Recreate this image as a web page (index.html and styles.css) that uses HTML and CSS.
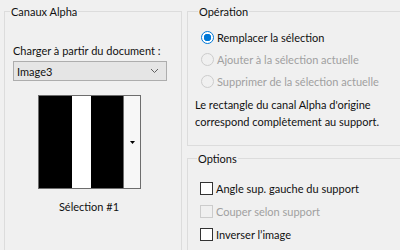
FILE: index.html
```html
<!DOCTYPE html>
<html lang="fr">
<head>
    <meta charset="UTF-8">
    <title>Canaux Alpha</title>
    <link rel="stylesheet" href="styles.css">
</head>
<body>

    <div class="dialog">
        <fieldset class="group group-left">
            <legend>Canaux Alpha</legend>
            <div class="field-label">Charger à partir du document :</div>
            <div class="select">
                <span>Image3</span>
                <svg width="9" height="6" viewBox="0 0 9 6"><polyline points="1,1 4.5,4.5 8,1" fill="none" stroke="#606060" stroke-width="1"/></svg>
            </div>
            <div class="thumb">
                <div class="thumb-img"></div>
                <div class="thumb-btn">
                    <svg width="5" height="3" viewBox="0 0 5 3"><polygon points="0,0 5,0 2.5,3" fill="#000"/></svg>
                </div>
            </div>
            <div class="caption">Sélection #1</div>
        </fieldset>

        <div class="col-right">
            <fieldset class="group group-op">
                <legend>Opération</legend>
                <label class="option"><input type="radio" name="op" checked> Remplacer la sélection</label>
                <label class="option disabled"><input type="radio" name="op" disabled> Ajouter à la sélection actuelle</label>
                <label class="option disabled"><input type="radio" name="op" disabled> Supprimer de la sélection actuelle</label>
                <p class="note">Le rectangle du canal Alpha d'origine<br>correspond complètement au support.</p>
            </fieldset>

            <fieldset class="group group-opts">
                <legend>Options</legend>
                <label class="check"><input type="checkbox"> Angle sup. gauche du support</label>
                <label class="check disabled"><input type="checkbox" disabled> Couper selon support</label>
                <label class="check"><input type="checkbox"> Inverser l’image</label>
            </fieldset>
        </div>
    </div>

</body>
</html>
```

FILE: styles.css
```css
body {
    margin: 0;
    background-color: #f0f0f0;
    font-family: Lato, "Open Sans", sans-serif;
    font-size: 11px;
    color: #111;
    overflow: hidden;
}

.dialog {
    display: flex;
    gap: 5px;
    padding: 4px 0 0 4px;
    width: 460px;
}

.group {
    margin: 0;
    padding: 0 8px;
    border: 1px solid #dcdcdc;
    min-width: 0;
    box-sizing: border-box;
}

.group legend {
    padding: 0 1px;
    margin-left: -3px;
    line-height: 15px;
}

.group-left {
    width: 178px;
    height: 280px;
}

.field-label {
    margin-top: 24px;
    line-height: 16px;
}

.select {
    margin-top: 2px;
    height: 18px;
    border: 1px solid #adadad;
    background-color: #e5e5e5;
    display: flex;
    align-items: center;
    justify-content: space-between;
    padding: 0 7px 0 3px;
    box-sizing: content-box;
    width: 142px;
}

.thumb {
    display: flex;
    margin: 14px 0 0 25px;
}

.thumb-img {
    width: 84px;
    height: 92px;
    border: 1px solid #6d6d6d;
    background: linear-gradient(to right, #000 0, #000 33px, #fff 33px, #fff 52px, #000 52px);
}

.thumb-btn {
    width: 16px;
    height: 92px;
    border: 1px solid #6d6d6d;
    border-left: none;
    background-color: #f7f7f7;
    display: flex;
    align-items: center;
    justify-content: center;
}

.caption {
    margin-top: 10px;
    width: 152px;
    text-align: center;
    line-height: 16px;
}

.col-right {
    display: flex;
    flex-direction: column;
    gap: 5px;
    width: 260px;
}

.group-op {
    height: 142px;
    padding-left: 13px;
}

.group-op .option:first-of-type {
    margin-top: 7px;
}

.option, .check {
    display: flex;
    align-items: center;
    gap: 3px;
    height: 22px;
}

.check {
    height: 23px;
}

.disabled {
    color: #a0a0a0;
}

input[type="radio"] {
    appearance: none;
    margin: 0;
    width: 13px;
    height: 13px;
    border: 1px solid #333;
    border-radius: 50%;
    background-color: #fff;
    box-sizing: border-box;
}

input[type="radio"]:checked {
    border-color: #0078d7;
    background: radial-gradient(circle, #0078d7 0, #0078d7 3.5px, #fff 4px);
}

input[type="radio"]:disabled {
    border-color: #cccccc;
    background-color: #f0f0f0;
}

input[type="checkbox"] {
    appearance: none;
    margin: 0;
    width: 13px;
    height: 13px;
    border: 1px solid #333;
    background-color: #fff;
    box-sizing: border-box;
}

input[type="checkbox"]:disabled {
    border-color: #cccccc;
    background-color: #f0f0f0;
}

.note {
    margin: 4px 0 0 -6px;
    line-height: 17px;
}

.group-opts {
    height: 120px;
    padding-left: 12px;
}

.group-opts .check:first-of-type {
    margin-top: 11px;
}
```
